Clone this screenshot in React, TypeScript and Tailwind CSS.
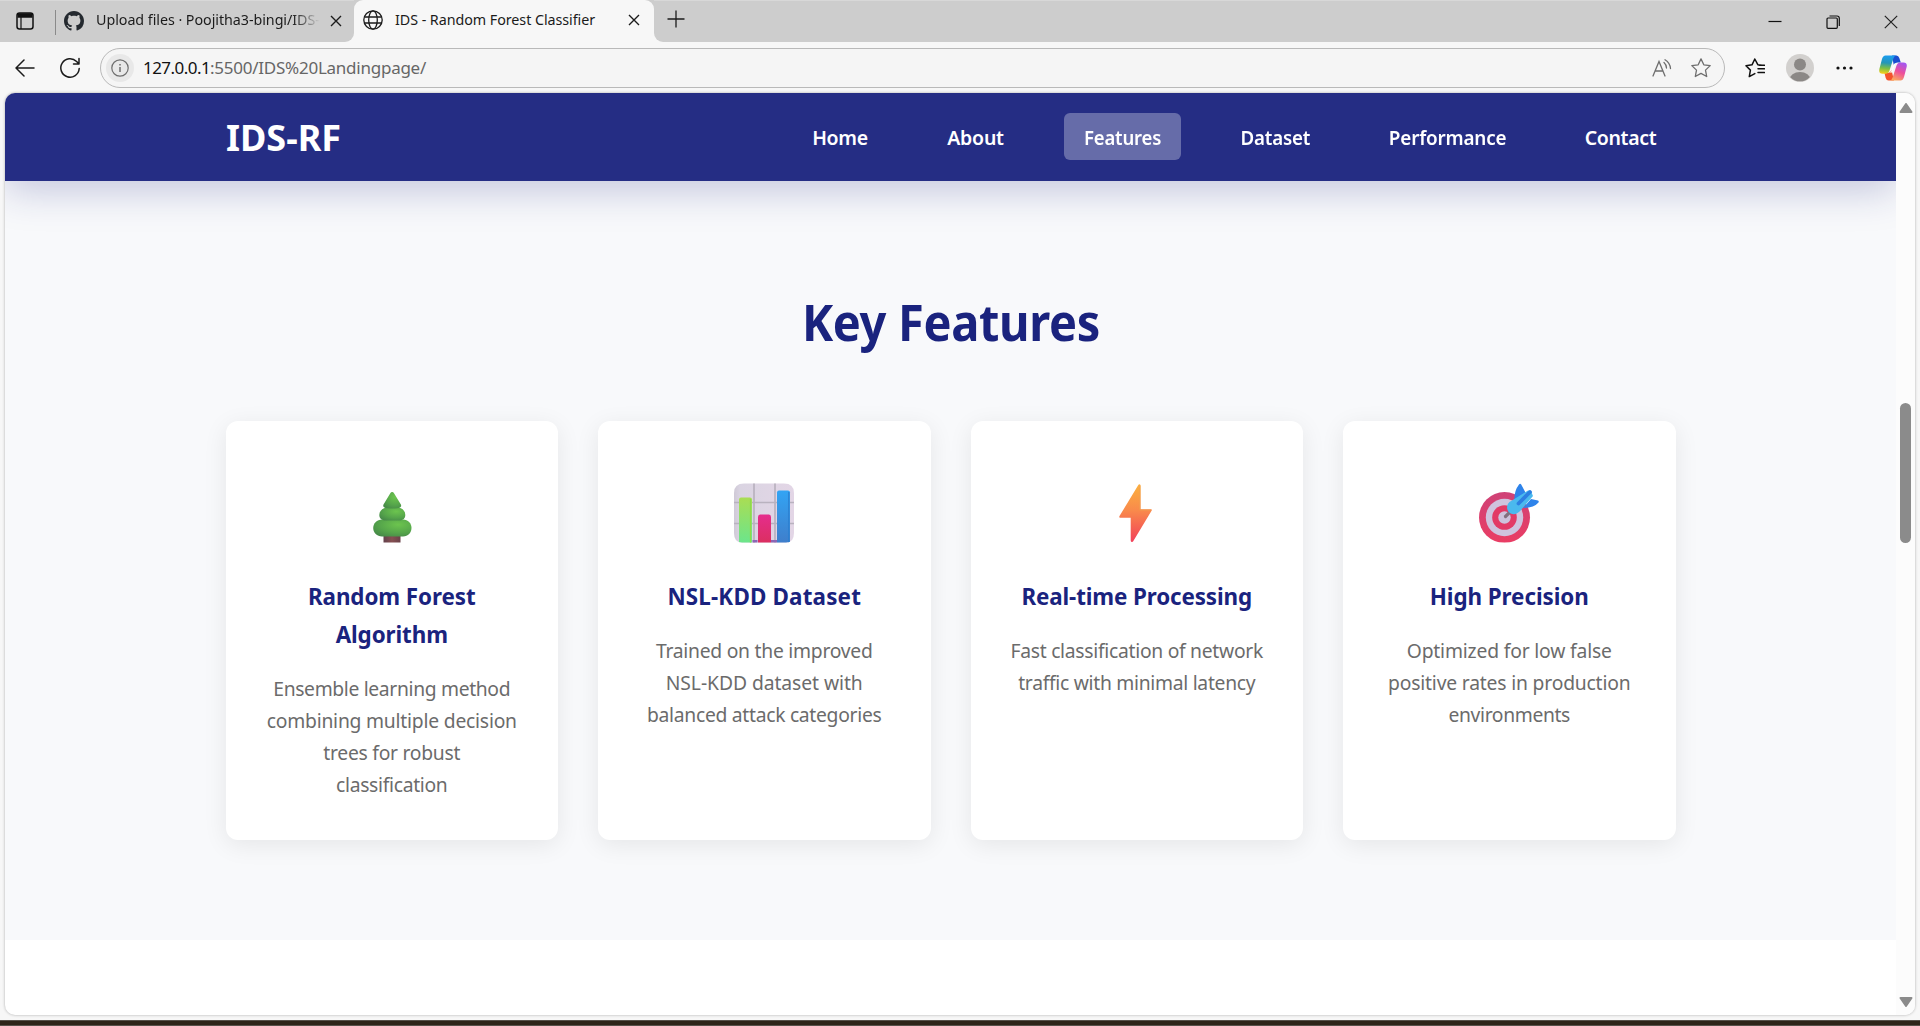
import type { ReactNode } from 'react';

function TreeIcon() {
  return (
    <svg viewBox="0 0 60 60" className="block h-[60px] w-[60px]">
      <defs>
        <radialGradient id="leaf" cx="0.65" cy="0.3" r="0.8">
          <stop offset="0" stopColor="#6cc44e" />
          <stop offset="0.6" stopColor="#56a64b" />
          <stop offset="1" stopColor="#468a48" />
        </radialGradient>
        <linearGradient id="trunk" x1="0" x2="1">
          <stop offset="0" stopColor="#63414c" />
          <stop offset="0.5" stopColor="#865052" />
          <stop offset="1" stopColor="#6a4149" />
        </linearGradient>
      </defs>
      <rect x="21.5" y="51" width="17" height="8.5" fill="url(#trunk)" />
      <path d="M20 36.500h21c5 0 8.500 4 8.500 8.500s-3.500 8.500-8.500 8.500H20c-5 0-8.800-4-8.800-8.500s3.800-8.500 8.800-8.500z" fill="url(#leaf)" />
      <path d="M24 24.500h13c3.500 1 6.300 3.500 6.300 7.500 0 3-2 5.500-6 5.500H23.500c-4 0-6.200-2.500-6.200-5.500 0-4 3-6.500 6.700-7.500z" fill="url(#leaf)" />
      <path d="M28.300 10.200c.8-1.500 2.900-1.500 3.700 0l6.900 11.300c1.100 2.500-.5 4-8.700 4s-9.800-1.500-8.700-4z" fill="url(#leaf)" />
    </svg>
  );
}

function ChartIcon() {
  return (
    <svg viewBox="0 0 60 60" className="block h-[60px] w-[60px]">
      <defs>
        <linearGradient id="barG" x1="0" y1="0" x2="0" y2="1">
          <stop offset="0" stopColor="#aadd53" />
          <stop offset="1" stopColor="#6be58c" />
        </linearGradient>
        <linearGradient id="barP" x1="0" y1="0" x2="0" y2="1">
          <stop offset="0" stopColor="#e52d8d" />
          <stop offset="1" stopColor="#db2f60" />
        </linearGradient>
        <linearGradient id="barB" x1="0" y1="0" x2="0" y2="1">
          <stop offset="0" stopColor="#32a4f4" />
          <stop offset="1" stopColor="#3f7ecb" />
        </linearGradient>
        <linearGradient id="sheet" x1="0" x2="1">
          <stop offset="0" stopColor="#cfc9d6" />
          <stop offset="0.1" stopColor="#dad4e2" />
          <stop offset="1" stopColor="#e3d6e6" />
        </linearGradient>
        <clipPath id="sheetClip">
          <path d="M0 10Q0 .5 10 .5h40q10 0 10 9.500v40q0 9.500-8 9.500H8q-8 0-8-9.500z" />
        </clipPath>
      </defs>
      <g clipPath="url(#sheetClip)">
        <rect width="60" height="60" fill="url(#sheet)" />
        <path d="M20 0v60M41 0v60M0 19.500h60M0 40.500h60" stroke="#b9b2bf" strokeWidth="1.700" />
        <path d="M18.500 57h5v3h-5zM37 57h6v3h-6z" fill="#8c67b4" />
        <path d="M5 60V16.500q0-2 2-2h9q2 0 2 2V60z" fill="url(#barG)" />
        <path d="M24 60V34q0-2.500 2-2.500h9q2 0 2 2.500v26z" fill="url(#barP)" />
        <path d="M43 60V9.500q0-2 2-2h9q2 0 2 2V60z" fill="url(#barB)" />
        <path d="M16.500 16v44" stroke="#8fd94b" strokeWidth="1.200" />
        <path d="M54.800 9v51" stroke="#2b7fd0" strokeWidth="1.200" />
      </g>
    </svg>
  );
}

function BoltIcon() {
  return (
    <svg viewBox="0 0 60 60" className="block h-[60px] w-[60px]">
      <defs>
        <linearGradient id="bolt" x1="0" y1="0" x2="0" y2="1">
          <stop offset="0" stopColor="#fbb03f" />
          <stop offset="0.450" stopColor="#f98a4b" />
          <stop offset="1" stopColor="#f2405a" />
        </linearGradient>
      </defs>
      <path d="M31.300 2q.7-1 1.700-.5.600.2.600 1.200v23.600h10.500q1.200.2.600 1.300L26.200 58.300q-.6.900-1.500.6-1-.2-1-1.300V34.700H13q-1.200-.3-.5-1.600z" fill="url(#bolt)" />
      <path d="M32.900 2.500v24.500h11" fill="none" stroke="#f0a052" strokeWidth="0.800" />
    </svg>
  );
}

function TargetIcon() {
  return (
    <svg viewBox="0 0 60 60" className="block h-[60px] w-[60px]">
      <defs>
        <linearGradient id="ring" x1="0" y1="0" x2="0" y2="1">
          <stop offset="0" stopColor="#cf4277" />
          <stop offset="1" stopColor="#ea3d64" />
        </linearGradient>
        <clipPath id="targetClip">
          <rect width="60" height="59.500" />
        </clipPath>
      </defs>
      <g clipPath="url(#targetClip)">
        <circle cx="25.500" cy="34.500" r="25.500" fill="url(#ring)" />
        <circle cx="25.500" cy="34.500" r="18.700" fill="#cfc3de" />
        <circle cx="25.500" cy="34.500" r="12.300" fill="#e23a66" />
        <circle cx="25.500" cy="34.500" r="6.200" fill="#cdc3dc" />
      </g>
      <path d="M26.500 33.500l5.500-5.500" stroke="#82707f" strokeWidth="3.200" strokeLinecap="round" />
      <path d="M35.500 17q-.5-9 4.500-15.500 1.200-1.500 2.200 0l5 9.500-7 9zM44 25l8-9 7 1.500q1.200.5.500 2-4.500 5.500-15.500 5.500z" fill="#2e83ea" />
      <path d="M28 24q0-3 2.500-5L49 7.500q3-.5 3.500 2L54 13 42 27q-4 5-9 4-5-1.500-5-7z" fill="#4ab9ee" />
      <path d="M39.500 20.500L51 9" stroke="#2c7fe2" strokeWidth="3.800" strokeLinecap="round" />
    </svg>
  );
}

function CopilotIcon() {
  return (
    <svg viewBox="0 0 28 26" className="block h-[26px] w-[28px]">
      <defs>
        <linearGradient id="cpA" x1="0.400" y1="0" x2="0.300" y2="1">
          <stop offset="0" stopColor="#1b9df0" />
          <stop offset="0.400" stopColor="#2596b8" />
          <stop offset="0.700" stopColor="#7cbf45" />
          <stop offset="1" stopColor="#f7cf1b" />
        </linearGradient>
        <linearGradient id="cpB" x1="0.700" y1="0" x2="0.300" y2="1">
          <stop offset="0" stopColor="#a457f0" />
          <stop offset="0.500" stopColor="#ee4f9a" />
          <stop offset="1" stopColor="#fbab5c" />
        </linearGradient>
      </defs>
      <path d="M13 .5h4.500q2 0 2.800 2.500l1.500 4.500h-3q-3 0-4 3z" fill="#1a4fd0" />
      <path d="M15 25.500H9.500q-2 0-2.800-2.500L5.500 18h3q3 0 4-3z" fill="#f4532c" />
      <path d="M6.500.5H17q-1.800.5-2.600 3L10.500 15.500Q9.500 18.700 6.500 18.700H3.500Q-.8 18.700.5 13.500L3 4Q4 .5 6.500.5z" fill="url(#cpA)" />
      <path d="M21.500 25.500H11q1.800-.5 2.600-3L17.500 10.500q1-3 4-3h3q4.300 0 3 5L25 22q-1 3.500-3.500 3.500z" fill="url(#cpB)" />
      <path d="M14.600 9.500q.8-1.300 2.400-1.300-1 .8-1.500 2.300L13.400 16.500q-.8 1.500-2.400 1.500 1-.8 1.500-2.300z" fill="#fff" />
    </svg>
  );
}

function CloseGlyph() {
  return (
    <svg viewBox="0 0 12 12" className="block h-3 w-3 shrink-0" fill="none" stroke="#1b1b1b" strokeWidth="1.400">
      <path d="M1 1l10 10M11 1L1 11" />
    </svg>
  );
}

function GithubMark() {
  return (
    <svg viewBox="0 0 16 16" className="block h-5 w-5 shrink-0" fill="#24292f">
      <path d="M8 0C3.580 0 0 3.580 0 8c0 3.540 2.290 6.530 5.470 7.590.4.070.55-.17.55-.38 0-.19-.01-.82-.01-1.490-2.010.37-2.530-.49-2.690-.94-.09-.23-.48-.94-.82-1.130-.28-.15-.68-.52-.01-.53.63-.01 1.080.58 1.230.82.72 1.210 1.870.87 2.330.66.070-.52.28-.87.51-1.070-1.780-.2-3.640-.89-3.640-3.950 0-.87.31-1.590.82-2.150-.08-.2-.36-1.020.08-2.120 0 0 .67-.21 2.200.82.64-.18 1.320-.27 2-.27s1.360.09 2 .27c1.530-1.040 2.200-.82 2.200-.82.44 1.100.16 1.920.08 2.120.51.560.82 1.270.82 2.150 0 3.070-1.870 3.750-3.650 3.950.29.25.54.73.54 1.480 0 1.070-.01 1.930-.01 2.200 0 .21.150.46.55.38A8.010 8.010 0 0 0 16 8c0-4.420-3.580-8-8-8z" />
    </svg>
  );
}

function TabStrip() {
  return (
    <div className="flex h-[42px] bg-[#f7f7f7]">
      <div className="flex w-[354px] items-center rounded-br-[9px] border-t border-[#d8d8d8] bg-[#cdcdcd] pb-[2px]">
        <svg viewBox="0 0 18 18" className="ml-4 h-[18px] w-[18px] shrink-0" fill="none" stroke="#111" strokeWidth="1.500">
          <rect x="1" y="1" width="16" height="16" rx="2.500" />
          <path d="M1.500 3.500h15" strokeWidth="4.500" />
          <path d="M5 5v12" strokeWidth="1.200" />
        </svg>
        <div className="mt-[3px] ml-[21px] h-[25px] w-px bg-[#8a8a8a]" />
        <div className="ml-2 flex"><GithubMark /></div>
        <div className="-mt-px ml-3 w-[228px] whitespace-nowrap bg-linear-to-r from-[#1b1b1b] from-86% to-[#cdcdcd] to-98% bg-clip-text text-[14.300px] tracking-[-0.050px] text-transparent">
          Upload files · Poojitha3-bingi/IDS-
        </div>
        <div className="ml-[6px]"><CloseGlyph /></div>
      </div>
      <div className="bg-[#cdcdcd]">
        <div className="flex h-[42px] w-[300px] items-center rounded-t-[9px] bg-[#f7f7f7] pb-[2px]">
          <svg viewBox="0 0 20 20" className="ml-[9px] h-5 w-5 shrink-0" fill="none" stroke="#1b1b1b" strokeWidth="1.300">
            <circle cx="10" cy="10" r="9.200" />
            <ellipse cx="10" cy="10" rx="4.300" ry="9.200" />
            <path d="M1.500 7h17M1.500 13h17" />
          </svg>
          <div className="-mt-px ml-[12px] w-[225px] whitespace-nowrap text-[14.300px] tracking-[-0.050px] text-[#1b1b1b]">IDS - Random Forest Classifier</div>
          <div className="ml-[8px]"><CloseGlyph /></div>
        </div>
      </div>
      <div className="flex flex-1 rounded-bl-[9px] border-t border-[#d8d8d8] bg-[#cdcdcd]">
        <svg viewBox="0 0 18 18" className="mt-[9px] ml-[13px] h-[18px] w-[18px]" stroke="#1b1b1b" strokeWidth="1.300">
          <path d="M9 .5v17M.5 9h17" />
        </svg>
        <div className="ml-auto flex items-center pr-[22px]">
          <svg viewBox="0 0 14 14" className="h-[14px] w-[14px]" stroke="#111" strokeWidth="1.200"><path d="M.5 6.500h13" /></svg>
          <svg viewBox="0 0 14 14" className="ml-11 h-[14px] w-[14px]" fill="none" stroke="#111" strokeWidth="1.200">
            <rect x="1" y="3" width="10.300" height="10.300" rx="1" />
            <path d="M3.500 1h7.500q2.300 0 2.300 2.300V11" />
          </svg>
          <svg viewBox="0 0 14 14" className="ml-[44px] h-[14px] w-[14px]" stroke="#222" strokeWidth="1.200"><path d="M.8.8l12.400 12.400M13.200.8L.8 13.200" /></svg>
        </div>
      </div>
    </div>
  );
}

function AddressRow() {
  return (
    <div className="flex h-[51px] items-center">
      <svg viewBox="0 0 20 18" className="ml-[15px] h-[18px] w-5" fill="none" stroke="#1b1b1b" strokeWidth="1.500" strokeLinecap="round" strokeLinejoin="round">
        <path d="M9 1L1 9l8 8M1 9h18" />
      </svg>
      <svg viewBox="0 0 22 22" className="ml-6 h-[22px] w-[22px]" fill="none" stroke="#1b1b1b" strokeWidth="1.500" strokeLinecap="round" strokeLinejoin="round">
        <path d="M20.200 11.500a9.200 9.200 0 1 1-2.600-7L20 7M20 1.500V7h-5.500" />
      </svg>
      <div className="ml-[19px] flex h-10 w-[1625px] items-center rounded-full border border-[#b9b9b9] bg-[#f5f5f5]">
        <div className="ml-[5px] flex h-7 w-7 items-center justify-center rounded-full bg-[#e8e8e8]">
          <svg viewBox="0 0 18 18" className="h-[18px] w-[18px]" fill="none" stroke="#6e6e6e" strokeWidth="1.200">
            <circle cx="9" cy="9" r="8.200" />
            <path d="M9 8v5M9 5v1.500" strokeWidth="1.500" />
          </svg>
        </div>
        <div className="-mt-px ml-[9px] whitespace-nowrap text-[17px] leading-none">
          <span className="tracking-[-0.550px] text-[#111]">127.0.0.1</span>
          <span className="tracking-[-0.250px] text-[#666]">:5500/IDS%20Landingpage/</span>
        </div>
        <svg viewBox="0 0 20 18" className="ml-auto h-[18px] w-5" fill="none" stroke="#6e6e6e" strokeWidth="1.300" strokeLinecap="round">
          <path d="M1 17L7 2.500 13 17M3 12h8M12 3.500q2.300 2 2.500 5.500M13 .8q5 3 5.500 8.700" />
        </svg>
        <svg viewBox="0 0 20 20" className="mr-[13px] ml-[19px] h-5 w-5" fill="none" stroke="#6e6e6e" strokeWidth="1.300" strokeLinejoin="round">
          <path d="M10 .9l2.800 5.900 6.400.8-4.700 4.500 1.200 6.400L10 15.400l-5.700 3.100 1.200-6.400L.8 7.600l6.400-.8z" />
        </svg>
      </div>
      <svg viewBox="0 0 20 20" className="ml-5 h-5 w-5" fill="none" stroke="#111" strokeWidth="1.500" strokeLinejoin="round" strokeLinecap="round">
        <path d="M17 7.300l-4.200-.6L9.800 1 7 6.800l-6 1 4.400 4.300-1.100 6.500 5.500-3M13 10.800h6.500M13 14.600h6.500M14 7.300h5.500" />
      </svg>
      <svg viewBox="0 0 28 28" className="ml-[21px] h-7 w-7">
        <defs><clipPath id="avatar"><circle cx="14" cy="14" r="13.300" /></clipPath></defs>
        <circle cx="14" cy="14" r="14" fill="#d2d0ce" />
        <g clipPath="url(#avatar)" fill="#8b8886">
          <circle cx="14" cy="10.500" r="6" />
          <ellipse cx="14" cy="26" rx="10.500" ry="8" />
        </g>
      </svg>
      <svg viewBox="0 0 17 4" className="ml-[22px] h-1 w-[17px]" fill="#111">
        <circle cx="2" cy="2" r="1.600" /><circle cx="8.500" cy="2" r="1.600" /><circle cx="15" cy="2" r="1.600" />
      </svg>
      <div className="ml-[26px]"><CopilotIcon /></div>
    </div>
  );
}

const links = [
  { label: 'Home', box: 'w-[94px]', text: 'tracking-[-0.300px]' },
  { label: 'About', box: 'w-[97px]', text: 'tracking-[-0.200px]' },
  { label: 'Features', box: 'w-[117px] bg-white/30', text: 'scale-x-[0.950] tracking-[-0.200px]' },
  { label: 'Dataset', box: 'w-[109px]', text: 'scale-x-[0.960] tracking-[-0.200px]' },
  { label: 'Performance', box: 'w-[155px]', text: 'scale-x-[0.970] tracking-[-0.200px]' },
  { label: 'Contact', box: 'w-[111px]', text: 'tracking-[-0.350px]' },
];

function SiteHeader() {
  return (
    <header className="relative z-10 flex h-[88px] shrink-0 items-center justify-between bg-[#252d84] pr-[220px] pl-[221px] text-white shadow-[0_8px_40px_rgba(26,35,126,0.250)]">
      <div className="mt-[2px] text-[36px] leading-none font-bold">IDS-RF</div>
      <nav className="-mt-px flex gap-10">
        {links.map((link) => (
          <a key={link.label} className={`flex h-[47px] items-center justify-center rounded-[6px] pt-[3px] text-[19.500px] font-semibold ${link.box}`}>
            <span className={link.text}>{link.label}</span>
          </a>
        ))}
      </nav>
    </header>
  );
}

type Line = [text: string, tracking: string];

const features: { icon: ReactNode; title: Line[]; body: Line[] }[] = [
  {
    icon: <TreeIcon />,
    title: [['Random Forest', 'tracking-[-0.080px]'], ['Algorithm', 'tracking-[-0.100px]']],
    body: [
      ['Ensemble learning method', 'tracking-[-0.340px]'],
      ['combining multiple decision', 'tracking-[-0.210px]'],
      ['trees for robust', 'tracking-[-0.260px]'],
      ['classification', 'tracking-[-0.300px]'],
    ],
  },
  {
    icon: <ChartIcon />,
    title: [['NSL-KDD Dataset', 'tracking-[0.180px]']],
    body: [
      ['Trained on the improved', 'tracking-[-0.250px]'],
      ['NSL-KDD dataset with', 'tracking-[-0.060px]'],
      ['balanced attack categories', 'tracking-[-0.290px]'],
    ],
  },
  {
    icon: <BoltIcon />,
    title: [['Real-time Processing', 'tracking-[-0.120px]']],
    body: [
      ['Fast classification of network', 'tracking-[-0.280px]'],
      ['traffic with minimal latency', 'tracking-[-0.290px]'],
    ],
  },
  {
    icon: <TargetIcon />,
    title: [['High Precision', 'tracking-[-0.060px]']],
    body: [
      ['Optimized for low false', 'tracking-[-0.170px]'],
      ['positive rates in production', 'tracking-[-0.180px]'],
      ['environments', 'tracking-[-0.350px]'],
    ],
  },
];

function FeatureSection() {
  return (
    <section className="h-[759px] shrink-0 bg-[#f8f9fb] px-[220.500px]">
      <h2 className="scale-x-[0.940] pt-[101px] text-center text-[50px] leading-[80px] font-bold tracking-[-0.350px] text-[#1a237e]">Key Features</h2>
      <div className="mt-[59px] grid grid-cols-4 gap-10">
        {features.map((f) => (
          <article key={f.title[0][0]} className="flex h-[419px] flex-col items-center rounded-[12px] bg-white pt-[62px] text-center whitespace-nowrap shadow-[0_5px_25px_rgba(0,0,0,0.080)]">
            {f.icon}
            <h3 className="mt-[35px] text-[22.400px] leading-[37.500px] font-bold text-[#1a237e]">
              {f.title.map(([t, c]) => <span key={t} className={`block ${c}`}>{t}</span>)}
            </h3>
            <p className="mt-[19.700px] text-[19.300px] leading-8 text-[#6b6b6b]">
              {f.body.map(([t, c]) => <span key={t} className={`block ${c}`}>{t}</span>)}
            </p>
          </article>
        ))}
      </div>
    </section>
  );
}

function Scrollbar() {
  return (
    <div className="flex w-[19px] flex-col items-center bg-[#fcfcfc]">
      <svg viewBox="0 0 14 10" className="mt-[10px] h-[10px] w-[14px]" fill="#8b8b8b" stroke="#8b8b8b" strokeWidth="2" strokeLinejoin="round"><path d="M7 1L1.500 9h11z" /></svg>
      <div className="mt-[290px] h-[140px] w-[11px] rounded-full bg-[#8b8b8b]" />
      <svg viewBox="0 0 14 10" className="mt-auto mb-[8px] h-[10px] w-[14px]" fill="#8b8b8b" stroke="#8b8b8b" strokeWidth="2" strokeLinejoin="round"><path d="M7 9L1.500 1h11z" /></svg>
    </div>
  );
}

export default function App() {
  return (
    <div className="flex h-[1026px] w-[1920px] flex-col overflow-hidden bg-[#f7f7f7] font-['Noto_Sans',sans-serif]">
      <TabStrip />
      <AddressRow />
      <div className="mx-[5px] flex h-[922px] overflow-hidden rounded-[10px] bg-white shadow-[0_0_3px_rgba(0,0,0,0.300)]">
        <div className="flex w-[1891px] flex-col overflow-hidden">
          <SiteHeader />
          <FeatureSection />
        </div>
        <Scrollbar />
      </div>
      <div className="mt-[5px] h-[6px] border-y border-[#57514a] bg-[#2e2419]" />
    </div>
  );
}
